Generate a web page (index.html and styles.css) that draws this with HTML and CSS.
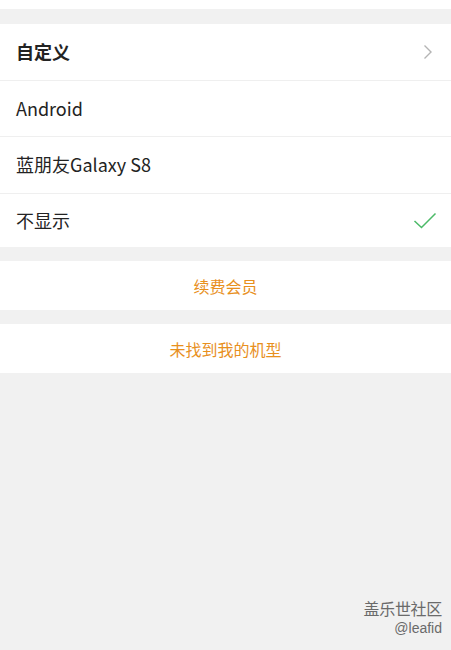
FILE: index.html
```html
<!DOCTYPE html>
<html lang="zh-CN">
<head>
<meta charset="utf-8">
<title>机型显示</title>
<link rel="stylesheet" href="styles.css">
</head>
<body>
<div class="page">
  <div class="topbar"></div>
  <div class="gap"></div>
  <ul class="list">
    <li class="row row-custom">
      <span class="label bold">自定义</span>
      <svg class="chev" width="10" height="16" viewBox="0 0 10 16"><path d="M1.5 1.5 L8 8 L1.5 14.5" fill="none" stroke="#b4b4b4" stroke-width="1.4"/></svg>
    </li>
    <li class="row row-mid"><span class="label">Android</span></li>
    <li class="row"><span class="label">蓝朋友Galaxy S8</span></li>
    <li class="row last">
      <span class="label">不显示</span>
      <svg class="check" width="24" height="18" viewBox="0 0 24 18"><path d="M1.5 9 L8.5 15.5 L22.5 1.5" fill="none" stroke="#4cba68" stroke-width="1.5"/></svg>
    </li>
  </ul>
  <div class="gap gap-small"></div>
  <div class="action">续费会员</div>
  <div class="gap gap-small"></div>
  <div class="action">未找到我的机型</div>
  <div class="rest">
    <div class="mark">
      <div class="mark-title">盖乐世社区</div>
      <div class="mark-user">@leafid</div>
    </div>
  </div>
</div>
</body>
</html>
```

FILE: styles.css
```css
html, body {
  margin: 0;
  padding: 0;
  background: #f1f1f1;
}
body {
  font-family: "Noto Sans CJK SC", "Noto Sans", sans-serif;
  color: #222;
}
.page {
  display: flex;
  flex-direction: column;
  min-height: 650px;
}
.topbar {
  height: 9px;
  background: #fff;
}
.gap {
  height: 15px;
  background: #f1f1f1;
}
.gap.gap-small {
  height: 14px;
}
.list {
  list-style: none;
  margin: 0;
  padding: 0;
  background: #fff;
}
.row {
  height: 56px;
  display: flex;
  align-items: center;
  justify-content: space-between;
  padding: 0 16px;
  border-bottom: 1px solid #efefef;
}
.row.row-mid {
  height: 55px;
}
.row.last {
  height: 53px;
  border-bottom: none;
  padding-right: 14px;
}
.label {
  font-size: 18px;
  line-height: 24px;
  color: #232323;
  margin-top: -2px;
}
.bold {
  font-weight: 700;
}
.chev {
  margin-right: 2px;
}
.action {
  height: 49px;
  background: #fff;
  display: flex;
  align-items: center;
  justify-content: center;
  font-size: 16px;
  color: #e8901e;
}
.rest {
  flex: 1;
  display: flex;
  justify-content: flex-end;
  align-items: flex-end;
  padding: 0 9px 12px 0;
}
.mark {
  text-align: right;
  color: #6a6a6a;
}
.mark-title {
  font-size: 16px;
  line-height: 20px;
  letter-spacing: -0.3px;
}
.mark-user {
  font-family: "Liberation Sans", sans-serif;
  font-size: 14px;
  line-height: 20px;
}
```
